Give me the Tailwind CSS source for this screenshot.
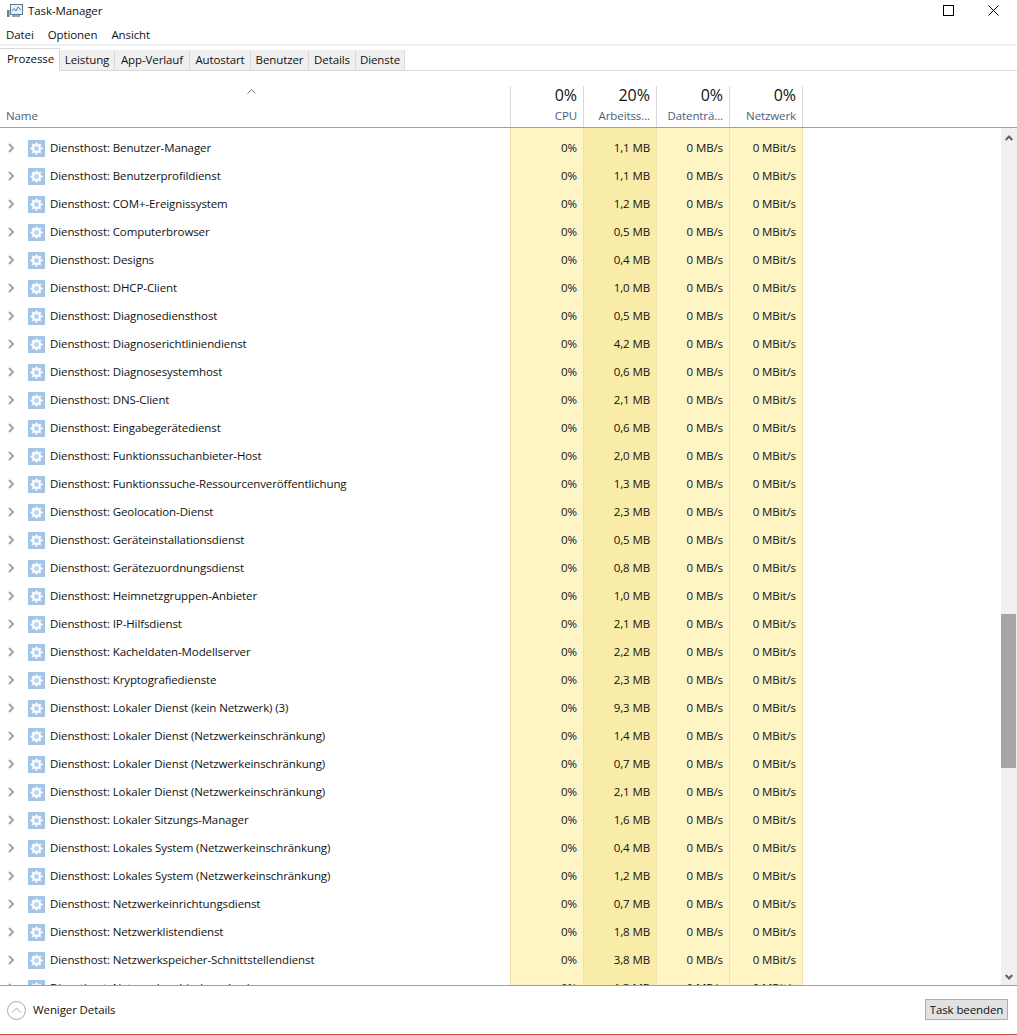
<!DOCTYPE html>
<html><head><meta charset="utf-8">
<script src="https://cdn.jsdelivr.net/npm/@tailwindcss/browser@4"></script>
<title>Task-Manager</title></head>
<body class="bg-white">
<div class="w-[1017px] h-[1035px] overflow-hidden flex flex-col bg-white text-[11.5px] tracking-[-0.1px] text-[#111111] font-['Open_Sans','Noto_Sans',sans-serif]">
  <!-- title bar -->
  <div class="h-[22px] flex items-center relative shrink-0">
    <svg class="ml-[7px] w-[16px] h-[16px]" viewBox="0 0 16 16"><rect x="3.5" y="1.5" width="12" height="10" fill="#e4f0fa" stroke="#66798a"/><path d="M5 8l2-2.500 2 2.500 2-4 3 3" fill="none" stroke="#3a86c8"/><rect x="0" y="7" width="2.500" height="7" fill="#5f8a7a"/><rect x="5" y="12" width="8" height="2" fill="#9aa7b0"/></svg>
    <span class="ml-[5px]">Task-Manager</span>
    <svg class="absolute left-[943px] top-[5px] w-[11px] h-[11px]" viewBox="0 0 11 11"><rect x=".5" y=".5" width="10" height="10" fill="none" stroke="#000"/></svg>
    <svg class="absolute left-[988px] top-[5px] w-[11px] h-[11px]" viewBox="0 0 11 11"><path d="M.5.5l10 10M10.5.5l-10 10" fill="none" stroke="#000"/></svg>
  </div>
  <!-- menu -->
  <div class="h-[22px] flex items-center pl-[6px] pt-[4px] gap-[14px] shrink-0"><span>Datei</span><span>Optionen</span><span>Ansicht</span></div>
  <div class="h-[2px] bg-[#f0f0f0] shrink-0"></div>
  <!-- tabs -->
  <div class="h-[25px] flex items-end border-b border-[#d9d9d9] shrink-0">
    <div class="h-[23px] -mb-px bg-white border-r border-t border-[#d9d9d9] w-[60px] pl-[7px] pt-[1px]">Prozesse</div>
    <div class="h-[20px] bg-[#f0f0f0] border-r border-[#d9d9d9] w-[55px] flex items-center justify-center">Leistung</div>
    <div class="h-[20px] bg-[#f0f0f0] border-r border-[#d9d9d9] w-[75px] flex items-center justify-center">App-Verlauf</div>
    <div class="h-[20px] bg-[#f0f0f0] border-r border-[#d9d9d9] w-[61px] flex items-center justify-center">Autostart</div>
    <div class="h-[20px] bg-[#f0f0f0] border-r border-[#d9d9d9] w-[58px] flex items-center justify-center">Benutzer</div>
    <div class="h-[20px] bg-[#f0f0f0] border-r border-[#d9d9d9] w-[47px] flex items-center justify-center">Details</div>
    <div class="h-[20px] bg-[#f0f0f0] border-r border-[#d9d9d9] w-[49px] flex items-center justify-center">Dienste</div>
  </div>
  <!-- header -->
  <div class="h-[57px] flex border-b border-[#a0a0a0] shrink-0">
    <div class="w-[510px] relative flex items-end pl-[6px] pb-[3px] text-[#4c607a]">
      <svg class="absolute left-[247px] top-[18px] w-[9px] h-[5px]" viewBox="0 0 9 5"><path d="M.5 4.500l4-4 4 4" fill="none" stroke="#777"/></svg>
      Name
    </div>
    <div class="w-[73px] mt-[15px] border-l border-[#d9d9d9] flex flex-col items-end pr-[6px]"><span class="text-[16px] leading-[20px] tracking-normal -mt-px">0%</span><span class="text-[#4c607a] mt-[2px]">CPU</span></div>
    <div class="w-[73px] mt-[15px] border-l border-[#d9d9d9] flex flex-col items-end pr-[6px]"><span class="text-[16px] leading-[20px] tracking-normal -mt-px">20%</span><span class="text-[#4c607a] mt-[2px]">Arbeitss...</span></div>
    <div class="w-[73px] mt-[15px] border-l border-[#d9d9d9] flex flex-col items-end pr-[6px]"><span class="text-[16px] leading-[20px] tracking-normal -mt-px">0%</span><span class="text-[#4c607a] mt-[2px]">Datenträ...</span></div>
    <div class="w-[74px] mt-[15px] border-x border-[#d9d9d9] flex flex-col items-end pr-[6px]"><span class="text-[16px] leading-[20px] tracking-normal -mt-px">0%</span><span class="text-[#4c607a] mt-[2px]">Netzwerk</span></div>
  </div>
  <!-- table -->
  <div class="h-[858px] relative overflow-hidden border-b border-[#a0a0a0] shrink-0">
    <div class="absolute inset-y-0 left-[510px] w-[293px] flex">
      <div class="w-[73px] bg-[#fff4c4] border-l border-[#f0e0ae]"></div>
      <div class="w-[73px] bg-[#f9eca9] border-l border-[#f0e0ae]"></div>
      <div class="w-[73px] bg-[#fff4c4] border-l border-[#f0e0ae]"></div>
      <div class="w-[74px] bg-[#fff4c4] border-x border-[#f0e0ae]"></div>
    </div>
    <div id="rows" class="relative pt-[6px]"></div>
    <div class="absolute right-0 top-0 bottom-0 w-[16px] bg-[#f0f0f0]">
      <svg class="absolute left-[4px] top-[7px] w-[8px] h-[6px]" viewBox="0 0 8 6"><path d="M.7 5L4 1.500 7.300 5" fill="none" stroke="#606060" stroke-width="2"/></svg>
      <div class="absolute left-0 right-px top-[486px] h-[154px] bg-[#a6a6a6]"></div>
      <svg class="absolute left-[4px] bottom-[5px] w-[8px] h-[6px]" viewBox="0 0 8 6"><path d="M.7 1L4 4.500 7.300 1" fill="none" stroke="#606060" stroke-width="2"/></svg>
    </div>
  </div>
  <!-- footer -->
  <div class="h-[48px] flex items-center relative shrink-0">
    <svg class="ml-[7px] w-[19px] h-[19px]" viewBox="0 0 19 19"><circle cx="9.500" cy="9.500" r="9" fill="none" stroke="#a8a8a8"/><path d="M5 11.500l4.500-4.500 4.500 4.500" fill="none" stroke="#a8a8a8"/></svg>
    <span class="ml-[7px]">Weniger Details</span>
    <button class="absolute left-[925px] top-[13px] w-[83px] h-[21px] bg-[#e1e1e1] border border-[#adadad] text-[11.5px] text-[#111111]">Task beenden</button>
  </div>
  <div class="h-px bg-[#c8503f] shrink-0"></div>
</div>
<script>
const d=[["Benutzer-Manager","1,1"],["Benutzerprofildienst","1,1"],["COM+-Ereignissystem","1,2"],["Computerbrowser","0,5"],["Designs","0,4"],["DHCP-Client","1,0"],["Diagnosediensthost","0,5"],["Diagnoserichtliniendienst","4,2"],["Diagnosesystemhost","0,6"],["DNS-Client","2,1"],["Eingabegerätedienst","0,6"],["Funktionssuchanbieter-Host","2,0"],["Funktionssuche-Ressourcenveröffentlichung","1,3"],["Geolocation-Dienst","2,3"],["Geräteinstallationsdienst","0,5"],["Gerätezuordnungsdienst","0,8"],["Heimnetzgruppen-Anbieter","1,0"],["IP-Hilfsdienst","2,1"],["Kacheldaten-Modellserver","2,2"],["Kryptografiedienste","2,3"],["Lokaler Dienst (kein Netzwerk) (3)","9,3"],["Lokaler Dienst (Netzwerkeinschränkung)","1,4"],["Lokaler Dienst (Netzwerkeinschränkung)","0,7"],["Lokaler Dienst (Netzwerkeinschränkung)","2,1"],["Lokaler Sitzungs-Manager","1,6"],["Lokales System (Netzwerkeinschränkung)","0,4"],["Lokales System (Netzwerkeinschränkung)","1,2"],["Netzwerkeinrichtungsdienst","0,7"],["Netzwerklistendienst","1,8"],["Netzwerkspeicher-Schnittstellendienst","3,8"],["Netzwerkverbindungsbroker","1,3"]];
const icon='<svg width="17" height="17" viewBox="0 0 17 17" class="ml-[13px] shrink-0"><rect width="17" height="17" fill="#a3c6e8"/><circle cx="8.500" cy="8.500" r="3.500" fill="#b8d3ee" stroke="#fff" stroke-width="2"/><path d="M8.500 2.500v2M8.500 12.500v2M2.500 8.500h2M12.500 8.500h2M4.300 4.300l1.500 1.500M11.200 11.200l1.500 1.500M12.700 4.300l-1.500 1.500M5.800 11.200l-1.500 1.500" stroke="#fff" stroke-width="2"/></svg>';
const chev='<svg width="7" height="10" viewBox="0 0 7 10" class="ml-[8px] shrink-0"><path d="M1 1l4 4-4 4" fill="none" stroke="#a0a0a0" stroke-width="1.800"/></svg>';
document.getElementById('rows').innerHTML=d.map(([n,m])=>`<div class="h-[28px] flex items-center">${chev}<div class="flex items-center w-[495px]">${icon}<span class="ml-[5px] whitespace-nowrap -mt-px">Diensthost: ${n}</span></div><div class="w-[73px] text-right pr-[6px] -mt-px">0%</div><div class="w-[73px] text-right pr-[6px] -mt-px">${m} MB</div><div class="w-[73px] text-right pr-[6px] -mt-px">0 MB/s</div><div class="w-[73px] text-right pr-[6px] -mt-px">0 MBit/s</div></div>`).join('');
</script>
</body></html>
